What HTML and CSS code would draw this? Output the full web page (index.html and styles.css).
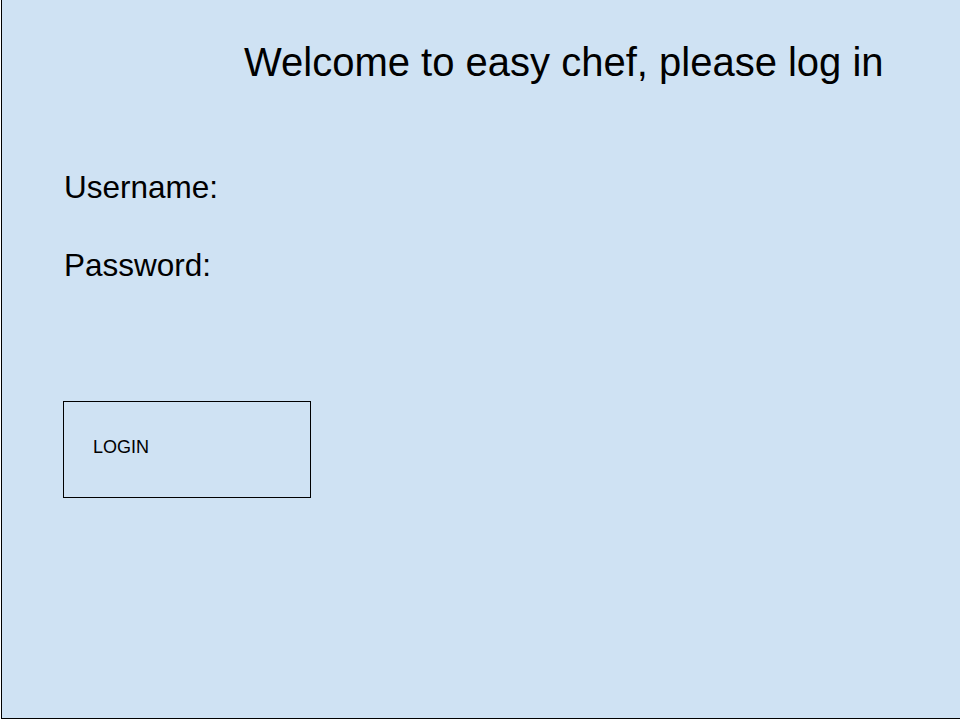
FILE: index.html
```html
<!DOCTYPE html>
<html>
<head>
<meta charset="utf-8">
<link rel="stylesheet" href="styles.css">
</head>
<body>
<div class="frame">
  <h1 class="title">Welcome to easy chef, please log in</h1>
  <div class="fields">
    <div class="field">Username:</div>
    <div class="field">Password:</div>
  </div>
  <div class="login">LOGIN</div>
</div>
</body>
</html>
```

FILE: styles.css
```css
html, body {
  margin: 0;
  padding: 0;
  background: #ffffff;
}
body {
  font-family: "Liberation Sans", Arial, sans-serif;
  color: #000;
  overflow: hidden;
}
.frame {
  margin-left: 1px;
  width: 959px;
  height: 717px;
  background: #cfe2f3;
  border-left: 1px solid #000;
  border-bottom: 1px solid #000;
  box-sizing: content-box;
  padding-top: 1px;
}
.title {
  margin: 36px 0 0 242px;
  font-weight: normal;
  font-size: 40px;
  line-height: 50px;
  white-space: nowrap;
}
.fields {
  margin: 84px 0 0 62px;
  display: flex;
  flex-direction: column;
  gap: 46px;
}
.field {
  font-size: 31.5px;
  line-height: 32px;
}
.login {
  margin: 120px 0 0 61px;
  width: 248px;
  height: 97px;
  border: 1px solid #000;
  box-sizing: border-box;
  font-size: 18px;
  padding: 0 0 4px 29px;
  display: flex;
  align-items: center;
}
```
